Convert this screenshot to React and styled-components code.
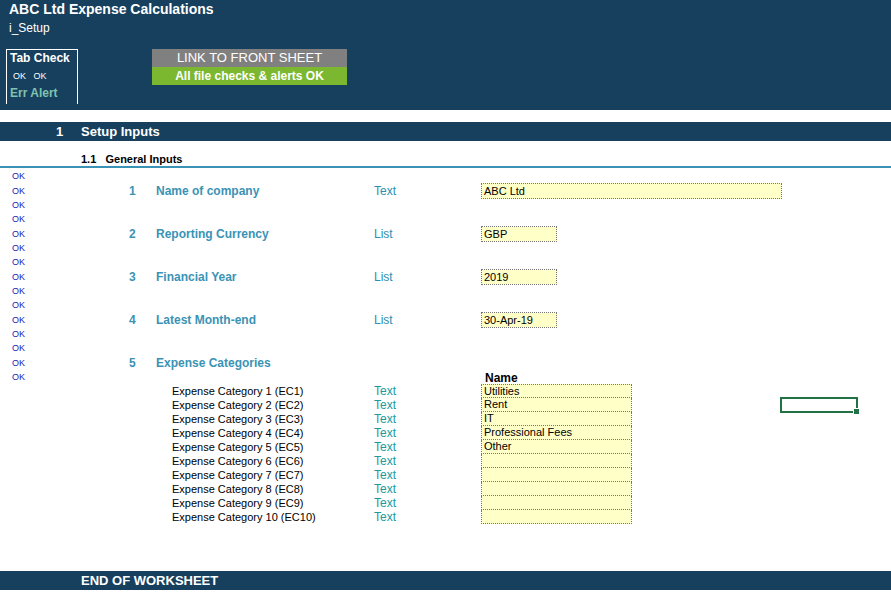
import React from 'react'
import styled, { createGlobalStyle } from 'styled-components'

const Global = createGlobalStyle`
  body { margin: 0; background: #fff; font-family: 'Liberation Sans', Arial, sans-serif; }
`
const NAVY = '#17405e'
const TEAL = '#3a93b5'

const Page = styled.div`
  position: relative;
  width: 891px;
  height: 598px;
  overflow: hidden;
`
const Header = styled.div`
  background: ${NAVY};
  height: 110px;
  color: #fff;
  padding: 0 9px;
  box-sizing: border-box;
  display: flex;
  flex-direction: column;
`
const Title = styled.div`
  font-weight: bold;
  font-size: 14px;
  margin-top: 1px;
  line-height: 16px;
`
const Sub = styled.div`
  font-size: 12px;
  margin-top: 4px;
  line-height: 14px;
`
const Controls = styled.div`
  display: flex;
  margin-top: 14px;
  margin-left: -3px;
  gap: 74px;
`
const TabBox = styled.div`
  width: 72px;
  height: 55px;
  border: 1px solid #fff;
  border-bottom: none;
  box-sizing: border-box;
  padding: 1px 3px;
  font-size: 12px;
  font-weight: bold;
  line-height: 15px;
`
const Small = styled.div`
  font-size: 9px;
  font-weight: normal;
  word-spacing: 5px;
  padding-left: 3px;
  line-height: 20px;
`
const Err = styled.div`
  color: #7fc3b0;
`
const Btns = styled.div`
  width: 195px;
  display: flex;
  flex-direction: column;
`
const Btn = styled.div`
  height: 18px;
  background: ${p => p.$bg};
  text-align: center;
  font-size: ${p => p.$fs}px;
  line-height: 18px;
  font-weight: ${p => p.$w || 'normal'};
`
const Band = styled.div`
  background: ${NAVY};
  color: #fff;
  height: 19px;
  margin-top: ${p => p.$mt}px;
  font-weight: bold;
  font-size: 13px;
  line-height: 19px;
  display: flex;
`
const BandNum = styled.span`
  width: 81px;
  padding-left: 56px;
  box-sizing: border-box;
`
const SubHead = styled.div`
  height: 27px;
  border-bottom: 2px solid ${TEAL};
  box-sizing: border-box;
  display: flex;
  align-items: flex-end;
  font-weight: bold;
  font-size: 11px;
  padding-left: 81px;
  padding-bottom: 1px;
`
const Rows = styled.div`
  display: flex;
  flex-direction: column;
  padding-top: 1px;
`
const Row = styled.div`
  height: ${p => p.$h || 14.35}px;
  display: grid;
  grid-template-columns: 81px 75px 217px 108px 1fr;
  align-items: center;
  font-size: 12px;
`
const Ok = styled.span`
  color: #1a1ab5;
  font-size: 9px;
  padding-left: 12px;
`
const Num = styled.span`
  color: ${TEAL};
  font-weight: bold;
  padding-left: 48px;
`
const Label = styled.span`
  color: ${p => (p.$plain ? '#000' : TEAL)};
  font-weight: ${p => (p.$plain ? 'normal' : 'bold')};
  padding-left: ${p => (p.$plain ? 16 : 0)}px;
  font-size: ${p => (p.$plain ? 11 : 12)}px;
`
const Type = styled.span`
  color: ${p => p.$c || TEAL};
  font-size: 12px;
  padding-left: 1px;
`
const Input = styled.div`
  width: ${p => p.$w}px;
  height: ${p => p.$h || 16}px;
  box-sizing: border-box;
  background: #ffffc8;
  border: 1px dotted #777;
  border-top: ${p => (p.$nt ? 'none' : '1px dotted #777')};
  font-size: 11px;
  line-height: ${p => (p.$h ? p.$h - 1 : 14)}px;
  padding-left: 2px;
  align-self: ${p => (p.$h ? 'stretch' : 'center')};
`
const NameHead = styled.span`
  font-weight: bold;
  font-size: 12px;
  padding-left: 4px;
  align-self: end;
  line-height: 12px;
`
const Selected = styled.div`
  position: absolute;
  left: 780px;
  top: 397px;
  width: 78px;
  height: 16px;
  box-sizing: border-box;
  border: 2px solid #217346;
  &::after {
    content: '';
    position: absolute;
    right: -4px;
    bottom: -4px;
    width: 5px;
    height: 5px;
    background: #217346;
    border: 1px solid #fff;
  }
`

const items = {
  1: ['1', 'Name of company', 'Text', 'ABC Ltd', 301],
  4: ['2', 'Reporting Currency', 'List', 'GBP', 76],
  7: ['3', 'Financial Year', 'List', '2019', 76],
  10: ['4', 'Latest Month-end', 'List', '30-Apr-19', 76],
}
const cats = ['Utilities', 'Rent', 'IT', 'Professional Fees', 'Other', '', '', '', '', '']

export default function App() {
  const top = []
  for (let i = 0; i < 14; i++) {
    const it = items[i]
    top.push(
      <Row key={i}>
        <Ok>OK</Ok>
        {it ? <Num>{it[0]}</Num> : i === 13 ? <Num>5</Num> : <span />}
        {it ? <Label>{it[1]}</Label> : i === 13 ? <Label>Expense Categories</Label> : <span />}
        {it ? <Type $c="#2a8fb0">{it[2]}</Type> : <span />}
        {it ? <Input $w={it[4]}>{it[3]}</Input> : i === 13 ? <span /> : <span />}
      </Row>
    )
  }
  return (
    <Page>
      <Global />
      <Header>
        <Title>ABC Ltd Expense Calculations</Title>
        <Sub>i_Setup</Sub>
        <Controls>
          <TabBox>
            Tab Check
            <Small>OK OK</Small>
            <Err>Err Alert</Err>
          </TabBox>
          <Btns>
            <Btn $bg="#808080" $fs={13}>LINK TO FRONT SHEET</Btn>
            <Btn $bg="#7cb82f" $fs={12} $w="bold">All file checks &amp; alerts OK</Btn>
          </Btns>
        </Controls>
      </Header>
      <Band $mt={12}>
        <BandNum>1</BandNum>Setup Inputs
      </Band>
      <SubHead>1.1&nbsp;&nbsp;&nbsp;General Inputs</SubHead>
      <Rows>
        {top}
        <Row>
          <Ok>OK</Ok>
          <span />
          <span />
          <span />
          <NameHead>Name</NameHead>
        </Row>
        {cats.map((c, i) => (
          <Row key={'c' + i} $h={14}>
            <span />
            <span />
            <Label $plain>Expense Category {i + 1} (EC{i + 1})</Label>
            <Type $c="#1a9a9a">Text</Type>
            <Input $w={151} $h={14} $nt={i > 0}>{c}</Input>
          </Row>
        ))}
      </Rows>
      <Band $mt={47}>
        <BandNum />END OF WORKSHEET
      </Band>
      <Selected />
    </Page>
  )
}
